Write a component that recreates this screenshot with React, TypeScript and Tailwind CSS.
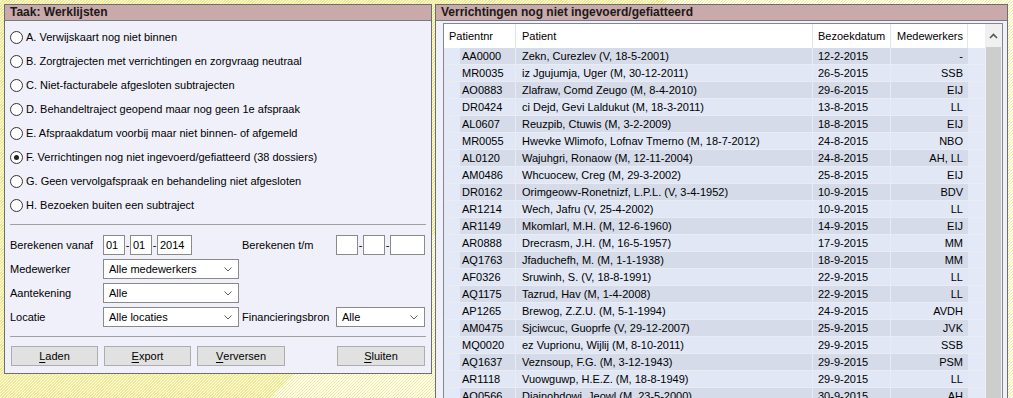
const options = [
  'A. Verwijskaart nog niet binnen',
  'B. Zorgtrajecten met verrichtingen en zorgvraag neutraal',
  'C. Niet-facturabele afgesloten subtrajecten',
  'D. Behandeltraject geopend maar nog geen 1e afspraak',
  'E. Afspraakdatum voorbij maar niet binnen- of afgemeld',
  'F. Verrichtingen nog niet ingevoerd/gefiatteerd (38 dossiers)',
  'G. Geen vervolgafspraak en behandeling niet afgesloten',
  'H. Bezoeken buiten een subtraject',
];

const rows: [string, string, string, string][] = [
  ['AA0000', 'Zekn, Curezlev (V, 18-5-2001)', '12-2-2015', '-'],
  ['MR0035', 'iz Jgujumja, Uger (M, 30-12-2011)', '26-5-2015', 'SSB'],
  ['AO0883', 'Zlafraw, Comd Zeugo (M, 8-4-2010)', '29-6-2015', 'EIJ'],
  ['DR0424', 'ci Dejd, Gevi Laldukut (M, 18-3-2011)', '13-8-2015', 'LL'],
  ['AL0607', 'Reuzpib, Ctuwis (M, 3-2-2009)', '18-8-2015', 'EIJ'],
  ['MR0055', 'Hwevke Wlimofo, Lofnav Tmerno (M, 18-7-2012)', '24-8-2015', 'NBO'],
  ['AL0120', 'Wajuhgri, Ronaow (M, 12-11-2004)', '24-8-2015', 'AH, LL'],
  ['AM0486', 'Whcuocew, Creg (M, 29-3-2002)', '25-8-2015', 'EIJ'],
  ['DR0162', 'Orimgeowv-Ronetnizf, L.P.L. (V, 3-4-1952)', '10-9-2015', 'BDV'],
  ['AR1214', 'Wech, Jafru (V, 25-4-2002)', '10-9-2015', 'LL'],
  ['AR1149', 'Mkomlarl, M.H. (M, 12-6-1960)', '14-9-2015', 'EIJ'],
  ['AR0888', 'Drecrasm, J.H. (M, 16-5-1957)', '17-9-2015', 'MM'],
  ['AQ1763', 'Jfaduchefh, M. (M, 1-1-1938)', '18-9-2015', 'MM'],
  ['AF0326', 'Sruwinh, S. (V, 18-8-1991)', '22-9-2015', 'LL'],
  ['AQ1175', 'Tazrud, Hav (M, 1-4-2008)', '22-9-2015', 'LL'],
  ['AP1265', 'Brewog, Z.Z.U. (M, 5-1-1994)', '24-9-2015', 'AVDH'],
  ['AM0475', 'Sjciwcuc, Guoprfe (V, 29-12-2007)', '25-9-2015', 'JVK'],
  ['MQ0020', 'ez Vuprionu, Wijlij (M, 8-10-2011)', '29-9-2015', 'SSB'],
  ['AQ1637', 'Veznsoup, F.G. (M, 3-12-1943)', '29-9-2015', 'PSM'],
  ['AR1118', 'Vuowguwp, H.E.Z. (M, 18-8-1949)', '29-9-2015', 'LL'],
  ['AQ0566', 'Djainohdowi, Jeowl (M, 23-5-2000)', '30-9-2015', 'AH'],
];

export default function App() {
  return (
    <div className="w-[1013px] h-[398px] overflow-hidden flex items-start gap-[3px] pl-[4px] pt-[4px] bg-[repeating-linear-gradient(135deg,#f0eb8e_0px,#f0eb8e_1px,#fefef4_1px,#fefef4_2.12px)] font-['Liberation_Sans',Arial,sans-serif] text-[11px] text-black">
      <TaskPanel />
      <ListPanel />
    </div>
  );
}

function PanelHeader({ title }: { title: string }) {
  return (
    <div className="h-[16px] shrink-0 bg-[#c9a9a9] border-b border-[#7a7a7a] px-[5px] font-bold text-[12px] leading-[15px] text-[#1a1a1a]">
      {title}
    </div>
  );
}

function Chevron() {
  return (
    <svg width="8" height="5" viewBox="0 0 8 5" className="shrink-0">
      <polyline points="0.5,0.5 4,4 7.5,0.5" fill="none" stroke="#606060" strokeWidth="1" />
    </svg>
  );
}

function Box({ w, value }: { w: string; value?: string }) {
  return (
    <div className={`${w} h-[20px] shrink-0 border border-[#8a8a8a] bg-white pl-[2px] leading-[18px]`}>
      {value}
    </div>
  );
}

function Dash() {
  return <div className="w-[5px] text-center leading-[18px]">-</div>;
}

function Select({ w, value }: { w: string; value: string }) {
  return (
    <div className={`${w} h-[20px] shrink-0 border border-[#8a8a8a] bg-white pl-[5px] pr-[6px] flex items-center justify-between`}>
      <span>{value}</span>
      <Chevron />
    </div>
  );
}

function Button({ first, rest, w }: { first: string; rest: string; w: string }) {
  return (
    <div className={`${w} h-[20px] border border-[#adadad] bg-[#e1e1e1] flex items-center justify-center`}>
      <span className="underline underline-offset-2">{first}</span>
      {rest}
    </div>
  );
}

function TaskPanel() {
  return (
    <div className="w-[428px] h-[370px] shrink-0 border border-[#6e6e6e] bg-[#f0f0fa] flex flex-col">
      <PanelHeader title="Taak: Werklijsten" />
      <div className="px-[5px] pt-[4px] flex flex-col">
        {options.map((o, i) => (
          <div key={o} className="h-[24px] flex items-center">
            <div className="w-[13px] h-[13px] rounded-full border border-[#333] bg-white flex items-center justify-center">
              {i === 5 && <div className="w-[5px] h-[5px] rounded-full bg-[#222]" />}
            </div>
            <span className="ml-[3px]">{o}</span>
          </div>
        ))}

        <div className="mt-[7px] h-px bg-[#a0a0a0]" />

        <div className="mt-[10px] flex flex-col gap-[4px]">
          <div className="h-[20px] flex items-center">
            <div className="w-[232px] flex items-center">
              <span className="w-[93px]">Berekenen vanaf</span>
              <Box w="w-[22px]" value="01" />
              <Dash />
              <Box w="w-[22px]" value="01" />
              <Dash />
              <Box w="w-[35px]" value="2014" />
            </div>
            <span className="w-[94px]">Berekenen t/m</span>
            <Box w="w-[22px]" />
            <Dash />
            <Box w="w-[22px]" />
            <Dash />
            <Box w="w-[35px]" />
          </div>

          <div className="h-[20px] flex items-center">
            <span className="w-[93px]">Medewerker</span>
            <Select w="w-[136px]" value="Alle medewerkers" />
          </div>

          <div className="h-[20px] flex items-center">
            <span className="w-[93px]">Aantekening</span>
            <Select w="w-[136px]" value="Alle" />
          </div>

          <div className="h-[20px] flex items-center">
            <span className="w-[93px]">Locatie</span>
            <Select w="w-[136px]" value="Alle locaties" />
            <span className="w-[97px] pl-[3px]">Financieringsbron</span>
            <Select w="w-[89px]" value="Alle" />
          </div>
        </div>

        <div className="mt-[9px] h-px bg-[#a0a0a0]" />

        <div className="mt-[9px] ml-[1px] mr-[1px] flex gap-[6px]">
          <Button w="w-[87px]" first="L" rest="aden" />
          <Button w="w-[87px]" first="E" rest="xport" />
          <Button w="w-[88px]" first="V" rest="erversen" />
          <div className="ml-auto">
            <Button w="w-[88px]" first="S" rest="luiten" />
          </div>
        </div>
      </div>
    </div>
  );
}

function ListPanel() {
  return (
    <div className="w-[573px] h-[420px] shrink-0 border border-[#6e6e6e] bg-[#f0f0fa] flex flex-col">
      <PanelHeader title="Verrichtingen nog niet ingevoerd/gefiatteerd" />
      <div className="pl-[7px] pr-[4px] pt-[2px]">
        <div className="border border-[#828790] bg-white flex h-[400px]">
          <div className="w-[541px]">
            <div className="h-[24px] flex items-center bg-white">
              <div className="w-[72px] h-full pl-[5px] flex items-center border-r border-[#e5e5e5]">Patientnr</div>
              <div className="w-[297px] h-full pl-[6px] flex items-center border-r border-[#e5e5e5]">Patient</div>
              <div className="w-[78px] h-full pl-[5px] flex items-center border-r border-[#e5e5e5]">Bezoekdatum</div>
              <div className="w-[77px] h-full pl-[6px] flex items-center border-r border-[#e5e5e5]">Medewerkers</div>
              <div className="flex-1" />
            </div>

            {rows.map(([nr, name, date, mw], i) => (
              <div
                key={nr}
                className={`h-[17px] flex border-b border-[#e9ecf2] leading-[16px] ${i % 2 === 0 ? 'bg-[#d5dbe9]' : 'bg-[#e1e7f5]'}`}
              >
                <div className="w-[16px] bg-[#e3e9f6]" />
                <div className="w-[56px] pl-[2px] border-r border-[#e9ecf2]">{nr}</div>
                <div className="w-[297px] pl-[6px] border-r border-[#e9ecf2] whitespace-nowrap overflow-hidden">{name}</div>
                <div className="w-[78px] pl-[5px] border-r border-[#e9ecf2]">{date}</div>
                <div className="w-[77px] pr-[5px] text-right">{mw}</div>
                <div className="flex-1 bg-[#e3e9f6]" />
              </div>
            ))}
          </div>

          <div className="w-[17px] bg-[#f0f0f0] flex flex-col">
            <div className="h-[23px] flex items-center justify-center">
              <svg width="9" height="6" viewBox="0 0 9 6">
                <polyline points="1,5 4.5,1.5 8,5" fill="none" stroke="#555" strokeWidth="1.6" />
              </svg>
            </div>
            <div className="mx-[1px] flex-1 bg-[#cdcdcd]" />
          </div>
        </div>
      </div>
    </div>
  );
}
